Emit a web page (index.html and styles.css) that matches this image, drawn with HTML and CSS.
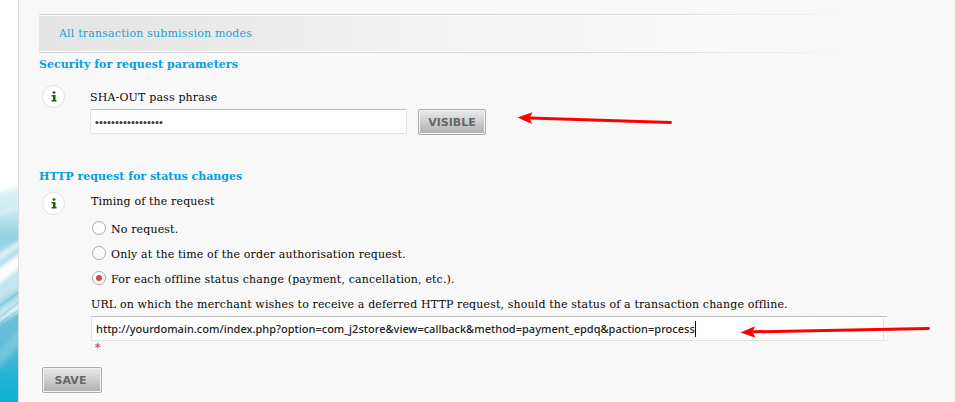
FILE: index.html
```html
<!DOCTYPE html>
<html lang="en">
<head>
<meta charset="utf-8">
<title>Transaction feedback</title>
<link rel="stylesheet" href="styles.css">
</head>
<body>
<div class="page">
  <aside class="backdrop">
    <svg width="18" height="402" viewBox="0 0 18 402" preserveAspectRatio="none">
      <defs>
        <filter id="soft" x="-50%" y="-10%" width="200%" height="120%"><feGaussianBlur stdDeviation="2"/></filter>
        <linearGradient id="sky" x1="0" y1="0" x2="0" y2="1">
          <stop offset="0" stop-color="#e6f5f9"/><stop offset=".3" stop-color="#c8e9f2"/><stop offset=".6" stop-color="#90d1e3"/><stop offset="1" stop-color="#b8e2ed"/>
        </linearGradient>
        <linearGradient id="sea" x1="0" y1="0" x2="0" y2="1">
          <stop offset="0" stop-color="#72bfd6"/><stop offset=".3" stop-color="#65bed8"/><stop offset=".65" stop-color="#24b2d5"/><stop offset="1" stop-color="#0bb1d8"/>
        </linearGradient>
      </defs>
      <g filter="url(#soft)">
        <path d="M-6 194L24 185V250L-6 272Z" fill="url(#sky)"/>
        <path d="M-6 214L24 203V207L-6 218Z" fill="#d9f0f6"/>
        <path d="M-6 257L24 238V244L-6 264Z" fill="#e4f4f8"/>
        <path d="M-6 287L24 265V303L-6 325Z" fill="#c2e5ef"/>
        <path d="M-6 306L24 285V292L-6 313Z" fill="#91cfe1"/>
        <path d="M-6 326L24 308V410H-6Z" fill="url(#sea)"/>
        <path d="M-6 355L24 326V341L-6 373Z" fill="#91d2e3" opacity=".5"/>
      </g>
      <path d="M0 306L18 293M0 317L18 303M0 323L18 310" stroke="#4daccc" stroke-width="1" opacity=".5"/>
    </svg>
  </aside>
  <main class="panel">
    <div class="banner"><div class="banner-fill"><a class="banner-link">All transaction submission modes</a></div></div>
    <section class="security">
      <h2 class="heading heading-security">Security for request parameters</h2>
      <div class="row">
        <span class="info"><svg width="6" height="11" viewBox="0 0 6 11"><path d="M1.500 1L3 0L4.500 1V2L3 3L1.500 2ZM.5 4H4.500V9H5.500V10.500H.5V9H2V5.500H.5Z" fill="#285c08"/></svg></span>
        <div class="fields">
          <label class="label pass-label">SHA-OUT pass phrase</label>
          <div class="entry">
            <div class="input pass-input"><svg width="70" height="5"><path d="M2 2.500H66.500" stroke="#353f50" stroke-width="3.200" stroke-linecap="round" stroke-dasharray="0 4"/></svg></div>
            <button class="button visible">VISIBLE</button>
          </div>
        </div>
      </div>
    </section>
    <section class="request">
      <h2 class="heading heading-request">HTTP request for status changes</h2>
      <div class="row">
        <span class="info"><svg width="6" height="11" viewBox="0 0 6 11"><path d="M1.500 1L3 0L4.500 1V2L3 3L1.500 2ZM.5 4H4.500V9H5.500V10.500H.5V9H2V5.500H.5Z" fill="#285c08"/></svg></span>
        <div class="fields request-fields">
          <p class="label"><span class="timing">Timing of the request</span></p>
          <div class="options">
            <label class="option"><span class="radio"></span><span>No request.</span></label>
            <label class="option"><span class="radio"></span><span>Only at the time of the order authorisation request.</span></label>
            <label class="option"><span class="radio checked"></span><span>For each offline status change (payment, cancellation, etc.).</span></label>
          </div>
          <p class="label"><span class="url-label">URL on which the merchant wishes to receive a deferred HTTP request, should the status of a transaction change offline.</span></p>
          <div class="url-wrap"><div class="input url-input"><span class="url">http://yourdomain.com/index.php?option=com_j2store&amp;view=callback&amp;method=payment_epdq&amp;paction=process</span><i class="caret"></i></div></div>
          <div class="required">*</div>
        </div>
      </div>
    </section>
    <button class="button save">SAVE</button>
  </main>
  <svg class="arrows" width="955" height="402">
    <g stroke="#fe0000" stroke-width="3" stroke-linecap="round" fill="#fe0000">
      <path d="M530 118L670.500 122.500M754 331.800L928.500 328.500"/>
      <path stroke="none" d="M517.500 117.500L532.500 112.200L529.500 118L532 124ZM740.500 332.500L755 326.300L752.500 332L755.500 337.800Z"/>
    </g>
  </svg>
</div>
</body>
</html>
```
FILE: styles.css
```css
* { box-sizing: border-box; }
body { margin: 0; background: #f8f8f8; color: #080808; font: 11px/16px "DejaVu Serif", serif; letter-spacing: .142px; }
.page { position: relative; display: flex; width: 955px; height: 402px; overflow: hidden; }
.backdrop { width: 18px; background: #fff; }
.backdrop svg { display: block; }
.panel { flex: 1; border-left: 1px solid #d9d9d9; padding: 14px 0 0 20px; background: #f8f8f8; }
.banner { width: 842px; height: 39px; padding: 1px 0; background: linear-gradient(90deg, #d2d2d2 0, #d8d8d8 65%, #e5e5e5 80%, #f8f8f8 98%); }
.banner-fill { height: 37px; border: solid #fff; border-width: 1px 0; padding: 10px 20px; background: linear-gradient(90deg, #e4e4e4 0, #ececec 28%, #f3f3f3 50%, #f8f8f8 75%, #f8f8f8 100%); border-image: linear-gradient(90deg, #fff 60%, #f8f8f8) 1; }
.banner-link { color: #189fdb; display: block; letter-spacing: .18px; }
.heading { margin: 0; font-size: 11px; line-height: 16px; color: #00a0e3; font-weight: bold; letter-spacing: .04px; }
.heading-request { letter-spacing: .01px; }
.security { padding-top: 4px; height: 115px; }
.row { display: flex; }
.info { display: flex; align-items: center; justify-content: center; width: 23px; height: 23px; margin: 0 25px 0 3px; border: 1px solid #e0e0e0; border-radius: 50%; background: #fff; }
.security .row { margin-top: 12px; }
.fields { flex: 1; }
.label { margin: 0; height: 16px; white-space: nowrap; }
.pass-label { display: block; margin: 5px 0 3px; letter-spacing: .16px; }
.entry { display: flex; gap: 11px; }
.input { display: flex; align-items: center; height: 25px; border: 1px solid #e2e2e2; border-top-color: #bdbdbd; border-radius: 2px; background: #fff; padding-left: 4px; }
.pass-input { width: 317px; padding-top: 2px; }
.button { display: block; margin: 0; height: 26px; padding: 0; border: 1px solid #adadad; border-radius: 2px; box-shadow: inset 0 0 0 1px #f3f3f3; background: linear-gradient(#eaeaea, #b0b0b0); color: #666; font: bold 11px/22px "DejaVu Sans", sans-serif; letter-spacing: 0; }
.visible { width: 68px; padding-top: 1px; }
.request { padding-top: 1px; }
.request .row { margin-top: 7px; }
.request-fields { padding: 2px 0 0 1px; }
.options { padding: 9px 0 0 1px; }
.option { display: flex; height: 25px; gap: 5px; line-height: 22px; white-space: nowrap; }
.radio { width: 14px; height: 14px; margin-top: 2px; border: 1px solid #aaa; border-radius: 50%; background: #fcfcfc; }
.checked { background: radial-gradient(circle, #dc4935 0 2.700px, #fff 3.300px); }
.options + .label { margin-top: 3px; letter-spacing: .135px; }
.url-wrap { width: 796px; margin-top: 3px; background: #fbfbfb; border: 1px solid #e5e5e5; border-top-color: #c4c4c4; border-width: 1px 0; height: 25px; }
.url-input { width: 793px; margin-top: -1px; font: 500 11px/15px "Noto Sans", sans-serif; color: #222; letter-spacing: .014px; }
.url { white-space: nowrap; }
.caret { width: 1px; height: 16px; background: #111; }
.required { margin: 0 0 0 4px; height: 14px; color: #e00824; line-height: 14px; }
.save { margin: 12px 0 0 3px; width: 60px; padding: 1px 3px 0 0; letter-spacing: .1px; }
.arrows { position: absolute; left: 0; top: 0; pointer-events: none; }
```
